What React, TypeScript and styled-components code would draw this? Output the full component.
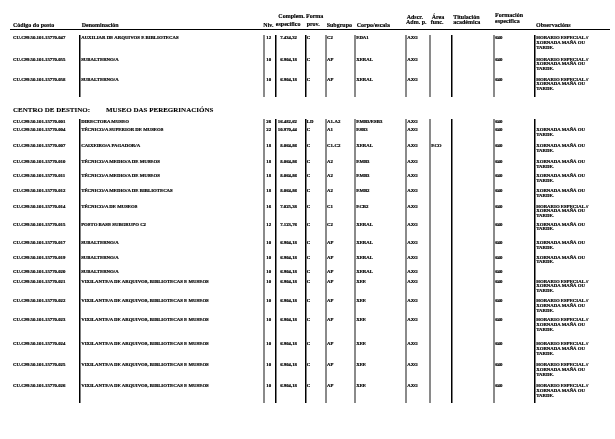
import React from 'react'
import styled, { createGlobalStyle } from 'styled-components'

const GlobalStyle = createGlobalStyle`
  html, body {
    margin: 0;
    padding: 0;
    background: #fff;
  }
  body {
    font-family: "Liberation Serif", "Times New Roman", serif;
    color: #000;
  }
`

// column edges snapped to whole pixels: 79, 263, 275, 305, 325, 354, 405, 429, 451, 493, 534
const COLS = '69px 184px 12px 30px 20px 29px 51px 24px 22px 42px 41px 71px'

type Line = 'none' | 'black' | 'gray'

const Page = styled.div`
  width: 615px;
  height: 439px;
  padding: 12px 0 0 10px;
  box-sizing: border-box;
  overflow: hidden;
  will-change: transform;
`

const HeaderRow = styled.div`
  display: grid;
  grid-template-columns: ${COLS};
  width: 600px;
  height: 17px;
  border-bottom: 1.5px solid #000;
  align-items: end;
`

const HeadCell = styled.div<{ $lift: number; $lh: number }>`
  display: flex;
  flex-direction: column;
  justify-content: flex-end;
  padding-bottom: ${(p) => p.$lift}px;
  font-size: 6px;
  font-weight: bold;
  line-height: ${(p) => p.$lh}px;
  white-space: nowrap;
  -webkit-text-stroke: 0.15px #000;
`

const HeadLabel = styled.span<{ $dx: number }>`
  display: block;
  margin-left: ${(p) => p.$dx}px;
`

const Section = styled.div<{ $top: number }>`
  margin-top: ${(p) => p.$top}px;
`

const Heading = styled.div`
  display: flex;
  gap: 16px;
  padding-left: 3px;
  font-size: 7px;
  line-height: 8px;
  font-weight: bold;
  margin-bottom: 5.4px;
  -webkit-text-stroke: 0.1px #000;
`

const Row = styled.div<{ $h: number }>`
  display: grid;
  grid-template-columns: ${COLS};
  height: ${(p) => p.$h}px;
`

const lineShadow: Record<Line, string> = {
  none: 'none',
  black: 'inset 1.5px 0 0 #000',
  gray: 'inset 2px 0 0 #8a8a8a',
}

const Cell = styled.div<{ $line: Line; $pl: number; $pr: number; $right?: boolean }>`
  box-sizing: border-box;
  box-shadow: ${(p) => lineShadow[p.$line]};
  padding: 1px ${(p) => p.$pr}px 0 ${(p) => p.$pl}px;
  text-align: ${(p) => (p.$right ? 'right' : 'left')};
  font-size: 4.8px;
  line-height: 4.8px;
  font-weight: bold;
  white-space: nowrap;
  -webkit-text-stroke: 0.2px #000;
`

const ObsLine = styled.div``

const columns: { line: Line; pl: number; pr?: number; right?: boolean }[] = [
  { line: 'none', pl: 3 },
  { line: 'black', pl: 2.2 },
  { line: 'gray', pl: 3.3 },
  { line: 'black', pl: 0, pr: 8, right: true },
  { line: 'black', pl: 1.8 },
  { line: 'gray', pl: 2 },
  { line: 'gray', pl: 2.2 },
  { line: 'gray', pl: 2.2 },
  { line: 'gray', pl: 2.2 },
  { line: 'black', pl: 2 },
  { line: 'gray', pl: 2.2 },
  { line: 'black', pl: 2.2 },
]

const headers: { lines: { t: string; dx: number }[]; lift: number; lh: number }[] = [
  { lines: [{ t: 'Código do posto', dx: 3 }], lift: 0.5, lh: 7 },
  { lines: [{ t: 'Denominación', dx: 2.7 }], lift: 0.5, lh: 7 },
  { lines: [{ t: 'Niv.', dx: 0.3 }], lift: 0.5, lh: 7 },
  {
    lines: [
      { t: 'Complem.', dx: 3.3 },
      { t: 'específico', dx: 0.8 },
    ],
    lift: 0.5,
    lh: 8.3,
  },
  {
    lines: [
      { t: 'Forma', dx: 1 },
      { t: 'prov.', dx: 1.7 },
    ],
    lift: 0.5,
    lh: 8.3,
  },
  { lines: [{ t: 'Subgrupo', dx: 1.7 }], lift: 0.5, lh: 7 },
  { lines: [{ t: 'Corpo/escala', dx: 2.7 }], lift: 0.5, lh: 7 },
  {
    lines: [
      { t: 'Adscr.', dx: 1.7 },
      { t: 'Adm. p.', dx: 1 },
    ],
    lift: 3.2,
    lh: 5.6,
  },
  {
    lines: [
      { t: 'Área', dx: 2.7 },
      { t: 'func.', dx: 1.7 },
    ],
    lift: 3.2,
    lh: 5.6,
  },
  {
    lines: [
      { t: 'Titulación', dx: 2.3 },
      { t: 'académica', dx: 2.3 },
    ],
    lift: 3.2,
    lh: 5.6,
  },
  {
    lines: [
      { t: 'Formación', dx: 2 },
      { t: 'específica', dx: 2 },
    ],
    lift: 4.8,
    lh: 5.7,
  },
  { lines: [{ t: 'Observacións', dx: 2 }], lift: 0.5, lh: 7 },
]

const H = ['HORARIO ESPECIAL //', 'XORNADA MAÑÁ OU', 'TARDE.']
const X = ['XORNADA MAÑÁ OU', 'TARDE.']

type Post = {
  h: number
  cells: string[]
  obs: string[]
}

const code = (n: string) => `CU.C99.50.101.15770.${n}`

const sub = (n: string, h: number): Post => ({
  h,
  cells: [code(n), 'SUBALTERNO/A', '10', '6.904,18', 'C', 'AP', 'XERAL', 'AXG', '', '', '640'],
  obs: H,
})

const vix = (n: string, h: number): Post => ({
  h,
  cells: [
    code(n),
    'VIXILANTE/A DE ARQUIVOS, BIBLIOTECAS E MUSEOS',
    '10',
    '6.904,18',
    'C',
    'AP',
    'XEE',
    'AXG',
    '',
    '',
    '640',
  ],
  obs: H,
})

const firstBlock: Post[] = [
  {
    h: 21.7,
    cells: [code('047'), 'AUXILIAR DE ARQUIVOS E BIBLIOTECAS', '12', '7.434,32', 'C', 'C2', 'EDA1', 'AXG', '', '', '640'],
    obs: H,
  },
  sub('055', 20),
  sub('058', 20.3),
]

const museumBlock: Post[] = [
  {
    h: 8,
    cells: [code('001'), 'DIRECTORA MUSEO', '26', '16.482,62', 'LD', 'A1-A2', 'EMB3/ESB3', 'AXG', '', '', '640'],
    obs: [],
  },
  {
    h: 15.5,
    cells: [code('004'), 'TÉCNICO/A SUPERIOR DE MUSEOS', '22', '10.970,44', 'C', 'A1', 'ESB3', 'AXG', '', '', '640'],
    obs: X,
  },
  {
    h: 15.9,
    cells: [code('007'), 'CAIXEIRO/A PAGADOR/A', '18', '8.064,86', 'C', 'C1-C2', 'XERAL', 'AXG', 'ECO', '', '640'],
    obs: X,
  },
  {
    h: 14.5,
    cells: [code('010'), 'TÉCNICO/A MEDIO/A DE MUSEOS', '18', '8.064,86', 'C', 'A2', 'EMB3', 'AXG', '', '', '640'],
    obs: X,
  },
  {
    h: 15.2,
    cells: [code('011'), 'TÉCNICO/A MEDIO/A DE MUSEOS', '18', '8.064,86', 'C', 'A2', 'EMB3', 'AXG', '', '', '640'],
    obs: X,
  },
  {
    h: 15.2,
    cells: [code('012'), 'TÉCNICO/A MEDIO/A DE BIBLIOTECAS', '18', '8.064,86', 'C', 'A2', 'EMB2', 'AXG', '', '', '640'],
    obs: X,
  },
  {
    h: 18,
    cells: [code('014'), 'TÉCNICO/A DE MUSEOS', '16', '7.025,38', 'C', 'C1', 'ECB2', 'AXG', '', '', '640'],
    obs: H,
  },
  {
    h: 18.7,
    cells: [code('015'), 'POSTO BASE SUBGRUPO C2', '12', '7.123,76', 'C', 'C2', 'XERAL', 'AXG', '', '', '640'],
    obs: X,
  },
  { ...sub('017', 14.3), obs: X },
  { ...sub('019', 14.7), obs: X },
  { ...sub('020', 9.3), obs: [] },
  vix('021', 19.5),
  vix('022', 19.3),
  vix('023', 23.5),
  vix('024', 21),
  vix('025', 21),
  vix('026', 20.3),
]

const PostRow: React.FC<{ post: Post }> = ({ post }) => (
  <Row $h={post.h}>
    {post.cells.map((value, i) => {
      const c = columns[i]
      return (
        <Cell key={i} $line={c.line} $pl={c.pl} $pr={c.pr ?? 0} $right={c.right}>
          {value}
        </Cell>
      )
    })}
    <Cell $line={columns[11].line} $pl={columns[11].pl} $pr={0}>
      {post.obs.map((l) => (
        <ObsLine key={l}>{l}</ObsLine>
      ))}
    </Cell>
  </Row>
)

export default function App() {
  return (
    <Page>
      <GlobalStyle />
      <HeaderRow>
        {headers.map((h, i) => (
          <HeadCell key={i} $lift={h.lift} $lh={h.lh}>
            {h.lines.map((l) => (
              <HeadLabel key={l.t} $dx={l.dx}>
                {l.t}
              </HeadLabel>
            ))}
          </HeadCell>
        ))}
      </HeaderRow>

      <Section $top={5}>
        {firstBlock.map((p) => (
          <PostRow key={p.cells[0]} post={p} />
        ))}
      </Section>

      <Section $top={9}>
        <Heading>
          <span>CENTRO DE DESTINO:</span>
          <span>MUSEO DAS PEREGRINACIÓNS</span>
        </Heading>
        {museumBlock.map((p) => (
          <PostRow key={p.cells[0]} post={p} />
        ))}
      </Section>
    </Page>
  )
}
